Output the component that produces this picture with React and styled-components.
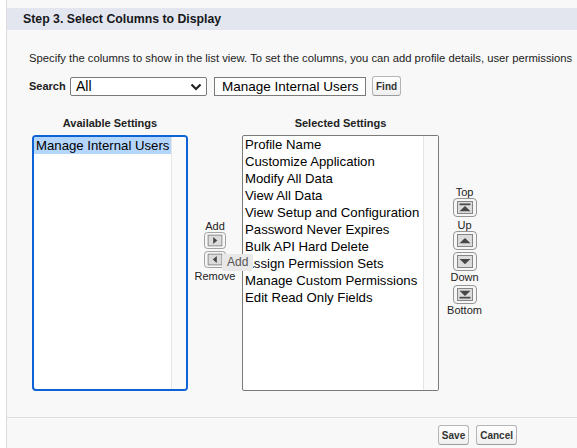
import React from 'react';
import styled, { createGlobalStyle } from 'styled-components';

const GlobalStyle = createGlobalStyle`
  html, body {
    margin: 0;
    padding: 0;
    background: #f8f8f8;
    overflow: hidden;
    font-family: "Liberation Sans", Arial, sans-serif;
    color: #000;
  }
`;

const availableItems = ['Manage Internal Users'];

const selectedItems = [
  'Profile Name',
  'Customize Application',
  'Modify All Data',
  'View All Data',
  'View Setup and Configuration',
  'Password Never Expires',
  'Bulk API Hard Delete',
  'Assign Permission Sets',
  'Manage Custom Permissions',
  'Edit Read Only Fields'
];

// small salesforce-style arrow images
const arrowShapes = {
  right: <polygon points="10,5.5 10,13.5 14.5,9.5" />,
  left: <polygon points="14,5.5 14,13.5 9.5,9.5" />,
  top: (
    <>
      <rect x="6.5" y="5.5" width="11" height="1.7" />
      <polygon points="6.5,13.2 17.5,13.2 12,8" />
    </>
  ),
  up: <polygon points="6.5,12.2 17.5,12.2 12,7" />,
  down: <polygon points="6.5,7 17.5,7 12,12.2" />,
  bottom: (
    <>
      <polygon points="6.5,5.8 17.5,5.8 12,11" />
      <rect x="6.5" y="11.8" width="11" height="1.7" />
    </>
  )
};

const ArrowIcon = ({ dir }) => (
  <svg width="24" height="19" viewBox="0 0 24 19" preserveAspectRatio="none">
    <rect x="0.5" y="0.5" width="23" height="18" rx="3.5" fill="#f6f6f6" stroke="#959595" />
    <rect x="4.5" y="3.5" width="15" height="12" fill="#dcdcdc" stroke="#868686" />
    <g fill="#474747">{arrowShapes[dir]}</g>
  </svg>
);

const App = () => {
  return (
    <>
      <GlobalStyle />
      <Page>
        <LeftStrip />
        <Main>
          <Header>Step 3. Select Columns to Display</Header>
          <Description>
            Specify the columns to show in the list view. To set the columns, you can add profile details, user permissions
          </Description>
          <SearchRow>
            <SearchLabel>Search</SearchLabel>
            <SelectWrap>
              <Select defaultValue="All">
                <option>All</option>
              </Select>
              <Chevron width="12" height="8" viewBox="0 0 12 8">
                <polyline points="1.5,1.5 6,6 10.5,1.5" fill="none" stroke="#222" strokeWidth="2.2" />
              </Chevron>
            </SelectWrap>
            <TextInput defaultValue="Manage Internal Users" />
            <SmallButton>Find</SmallButton>
          </SearchRow>

          <Columns>
            <ListColumn $width={156}>
              <ColumnLabel>Available Settings</ColumnLabel>
              <ListBox $focused>
                <Items>
                  {availableItems.map((item, i) => (
                    <Item key={item} $selected={i === 0}>{item}</Item>
                  ))}
                </Items>
                <Gutter />
              </ListBox>
            </ListColumn>

            <ButtonColumn $width={54}>
              <ArrowLabel>Add</ArrowLabel>
              <ArrowButton $small>
                <ArrowIcon dir="right" />
              </ArrowButton>
              <TooltipAnchor>
                <ArrowButton $small $gap>
                  <ArrowIcon dir="left" />
                </ArrowButton>
                <Tooltip>Add</Tooltip>
              </TooltipAnchor>
              <ArrowLabel $gap>Remove</ArrowLabel>
            </ButtonColumn>

            <ListColumn $width={197}>
              <ColumnLabel>Selected Settings</ColumnLabel>
              <ListBox>
                <Items>
                  {selectedItems.map((item) => (
                    <Item key={item}>{item}</Item>
                  ))}
                </Items>
                <Gutter />
              </ListBox>
            </ListColumn>

            <ButtonColumn $width={51}>
              <ArrowLabel>Top</ArrowLabel>
              <ArrowButton>
                <ArrowIcon dir="top" />
              </ArrowButton>
              <ArrowLabel $gap>Up</ArrowLabel>
              <ArrowButton>
                <ArrowIcon dir="up" />
              </ArrowButton>
              <ArrowButton $gap>
                <ArrowIcon dir="down" />
              </ArrowButton>
              <ArrowLabel>Down</ArrowLabel>
              <ArrowButton $gap>
                <ArrowIcon dir="bottom" />
              </ArrowButton>
              <ArrowLabel>Bottom</ArrowLabel>
            </ButtonColumn>
          </Columns>

          <Footer>
            <SmallButton>Save</SmallButton>
            <SmallButton>Cancel</SmallButton>
          </Footer>
        </Main>
      </Page>
    </>
  );
};

const Page = styled.div`
  display: flex;
  width: 577px;
  height: 448px;
  overflow: hidden;
`;

const LeftStrip = styled.div`
  width: 6px;
  flex: none;
  background: #fff;
  border-right: 1px solid #dcdcdc;
`;

const Main = styled.div`
  flex: 1;
  min-width: 0;
  display: flex;
  flex-direction: column;
  padding-top: 8px;
  background: #f8f8f8;
`;

const Header = styled.div`
  height: 22px;
  line-height: 22px;
  padding-left: 16px;
  background: #e3e6ef;
  font-weight: bold;
  font-size: 12.3px;
  color: #16171a;
  white-space: nowrap;
`;

const Description = styled.div`
  margin-top: 22px;
  padding-left: 22px;
  font-size: 11.25px;
  line-height: 13px;
  color: #222;
  white-space: nowrap;
`;

const SearchRow = styled.div`
  display: flex;
  align-items: center;
  margin-top: 11px;
  padding-left: 22px;
  height: 20px;
`;

const SearchLabel = styled.span`
  font-size: 11px;
  font-weight: bold;
  color: #222;
  width: 41px;
`;

const SelectWrap = styled.div`
  position: relative;
  width: 137px;
  height: 19px;
  margin-right: 7px;
`;

const Select = styled.select`
  appearance: none;
  width: 100%;
  height: 100%;
  box-sizing: border-box;
  border: 1px solid #7a7a7a;
  border-radius: 2px;
  background: #fff;
  padding: 0 0 0 5px;
  font-family: "Liberation Sans", Arial, sans-serif;
  font-size: 14px;
  color: #000;
`;

const Chevron = styled.svg`
  position: absolute;
  right: 5px;
  top: 6px;
  pointer-events: none;
`;

const TextInput = styled.input`
  width: 152px;
  height: 19px;
  box-sizing: border-box;
  border: 1px solid #7a7a7a;
  border-radius: 0;
  background: #fff;
  padding: 0 0 0 7px;
  margin-right: 6px;
  font-family: "Liberation Sans", Arial, sans-serif;
  font-size: 13.5px;
  color: #000;
`;

const SmallButton = styled.button`
  height: 20px;
  box-sizing: border-box;
  padding: 0 3px;
  border: 1px solid #b5b5b5;
  border-bottom-color: #9c9c9c;
  border-radius: 3px;
  background: linear-gradient(#ffffff, #efefef);
  font-family: "Liberation Sans", Arial, sans-serif;
  font-weight: bold;
  font-size: 10px;
  color: #333;
  cursor: pointer;
`;

const Columns = styled.div`
  display: flex;
  margin-top: 21px;
  padding-left: 25px;
`;

const ListColumn = styled.div`
  width: ${(p) => p.$width}px;
  display: flex;
  flex-direction: column;
  align-items: stretch;
`;

const ColumnLabel = styled.div`
  height: 13px;
  line-height: 13px;
  margin-bottom: 5px;
  text-align: center;
  font-size: 11px;
  font-weight: bold;
  color: #222;
  white-space: nowrap;
`;

const ListBox = styled.div`
  display: flex;
  height: 256px;
  box-sizing: border-box;
  background: #fff;
  border: ${(p) => (p.$focused ? '2px solid #0d62d6' : '1px solid #7a7a7a')};
  border-radius: ${(p) => (p.$focused ? '4px' : '2px')};
  overflow: hidden;
`;

const Items = styled.div`
  flex: 1;
  min-width: 0;
`;

const Item = styled.div`
  height: 17px;
  line-height: 17px;
  padding-left: 2px;
  font-size: 13.2px;
  white-space: nowrap;
  color: #000;
  background: ${(p) => (p.$selected ? '#b4d5fc' : 'transparent')};
`;

const Gutter = styled.div`
  width: 14px;
  flex: none;
  background: #fafafa;
  border-left: 1px solid #e6e6e6;
`;

const ButtonColumn = styled.div`
  width: ${(p) => p.$width}px;
  display: flex;
  flex-direction: column;
  align-items: center;
  justify-content: center;
  padding-bottom: 6px;
`;

const ArrowLabel = styled.div`
  font-size: 11px;
  line-height: 12px;
  color: #222;
  margin-top: ${(p) => (p.$gap ? '2px' : '0')};
`;

const ArrowButton = styled.div`
  display: flex;
  margin-top: ${(p) => (p.$gap ? '2px' : '0')};

  svg {
    width: ${(p) => (p.$small ? '22px' : '24px')};
    height: ${(p) => (p.$small ? '17px' : '19px')};
  }
`;

const TooltipAnchor = styled.div`
  position: relative;
`;

const Tooltip = styled.div`
  position: absolute;
  left: 18px;
  top: 5px;
  z-index: 2;
  padding: 0 5px;
  height: 17px;
  line-height: 17px;
  background: #e8e8e8;
  border-radius: 2px;
  font-size: 12px;
  color: #555;
`;

const Footer = styled.div`
  display: flex;
  justify-content: flex-end;
  align-items: flex-start;
  gap: 7px;
  margin-top: 26px;
  padding: 7px 60px 0 0;
  flex: 1;
  border-top: 1px solid #dcdcdc;
  background: #f8f8f8;
`;

export default App;
